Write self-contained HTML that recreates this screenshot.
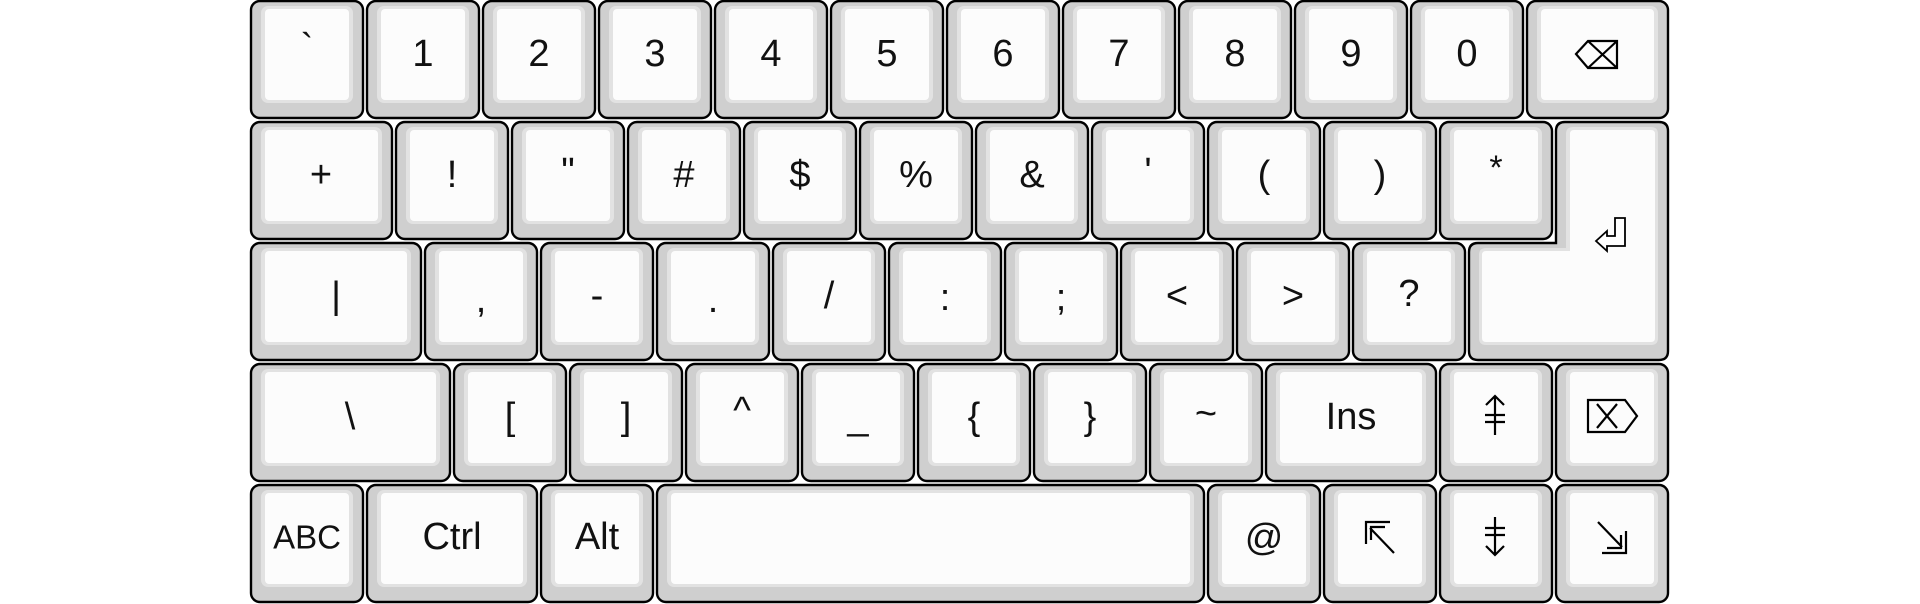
<!DOCTYPE html>
<html><head><meta charset="utf-8"><style>
html,body{margin:0;padding:0;background:#fff;width:1920px;height:604px;overflow:hidden}
svg{display:block}
text{font-family:"Liberation Sans",Arial,sans-serif;font-size:38px;fill:#111;text-anchor:middle;dominant-baseline:central}
.o{fill:#cfcfcf;stroke:#000;stroke-width:2.4}
.r{fill:#e2e2e2}
.f{fill:#fcfcfc}
.i{fill:none;stroke:#000;stroke-width:2.2}
</style></head><body>
<svg width="1920" height="604" viewBox="0 0 1920 604">
<defs>
<g id="k1"><rect class="o" x="0" y="0" width="112" height="117" rx="9"/><rect class="r" x="10" y="5" width="92" height="97" rx="7"/><rect class="f" x="14" y="8" width="84" height="91" rx="4"/></g>
<g id="k125"><rect class="o" x="0" y="0" width="141" height="117" rx="9"/><rect class="r" x="10" y="5" width="121" height="97" rx="7"/><rect class="f" x="14" y="8" width="113" height="91" rx="4"/></g>
<g id="k15"><rect class="o" x="0" y="0" width="170" height="117" rx="9"/><rect class="r" x="10" y="5" width="150" height="97" rx="7"/><rect class="f" x="14" y="8" width="142" height="91" rx="4"/></g>
<g id="k175"><rect class="o" x="0" y="0" width="199" height="117" rx="9"/><rect class="r" x="10" y="5" width="179" height="97" rx="7"/><rect class="f" x="14" y="8" width="171" height="91" rx="4"/></g>
<g id="ksp"><rect class="o" x="0" y="0" width="547" height="117" rx="9"/><rect class="r" x="10" y="5" width="527" height="97" rx="7"/><rect class="f" x="14" y="8" width="519" height="91" rx="4"/></g>
</defs>

<!-- Row 0 -->
<g transform="translate(0,1)">
<use href="#k1" x="251"/><use href="#k1" x="367"/><use href="#k1" x="483"/><use href="#k1" x="599"/><use href="#k1" x="715"/><use href="#k1" x="831"/><use href="#k1" x="947"/><use href="#k1" x="1063"/><use href="#k1" x="1179"/><use href="#k1" x="1295"/><use href="#k1" x="1411"/><use href="#k125" x="1527"/>
<text x="307" y="47">`</text><text x="423" y="53">1</text><text x="539" y="53">2</text><text x="655" y="53">3</text><text x="771" y="53">4</text><text x="887" y="53">5</text><text x="1003" y="53">6</text><text x="1119" y="53">7</text><text x="1235" y="53">8</text><text x="1351" y="53">9</text><text x="1467" y="53">0</text>
<path class="i" d="M1576,53 L1588,40 H1617 V67 H1588 Z M1588,40 L1617,67 M1617,40 L1588,67"/>
</g>

<!-- Row 1 -->
<g transform="translate(0,122)">
<use href="#k125" x="251"/><use href="#k1" x="396"/><use href="#k1" x="512"/><use href="#k1" x="628"/><use href="#k1" x="744"/><use href="#k1" x="860"/><use href="#k1" x="976"/><use href="#k1" x="1092"/><use href="#k1" x="1208"/><use href="#k1" x="1324"/><use href="#k1" x="1440"/>
<text x="321" y="53">+</text><text x="452" y="53">!</text><text x="568" y="50">"</text><text x="684" y="53">#</text><text x="800" y="53">$</text><text x="916" y="53">%</text><text x="1032" y="53">&amp;</text><text x="1148" y="50">'</text><text x="1264" y="53">(</text><text x="1380" y="53">)</text><text x="1496" y="46" style="font-size:34px">*</text>
</g>

<!-- Enter -->
<path class="o" d="M1565,122 H1659 Q1668,122 1668,131 V351 Q1668,360 1659,360 H1478 Q1469,360 1469,351 V252 Q1469,243 1478,243 H1556 V131 Q1556,122 1565,122 Z"/>
<path class="r" d="M1573,127 H1651 Q1658,127 1658,134 V338 Q1658,345 1651,345 H1486 Q1479,345 1479,338 V255 Q1479,248 1486,248 H1566 V134 Q1566,127 1573,127 Z"/>
<path class="f" d="M1574,130 H1651 Q1655,130 1655,134 V338 Q1655,342 1651,342 H1486 Q1482,342 1482,338 V255 Q1482,251 1486,251 H1570 V134 Q1570,130 1574,130 Z"/>
<path class="i" style="fill:#fff;stroke-width:1.8" d="M1596,241 L1607,231 V236 H1615 V218 H1625 V246 H1607 V251 Z"/>

<!-- Row 2 -->
<g transform="translate(0,243)">
<use href="#k15" x="251"/><use href="#k1" x="425"/><use href="#k1" x="541"/><use href="#k1" x="657"/><use href="#k1" x="773"/><use href="#k1" x="889"/><use href="#k1" x="1005"/><use href="#k1" x="1121"/><use href="#k1" x="1237"/><use href="#k1" x="1353"/>
<text x="336" y="53">|</text><text x="481" y="57">,</text><text x="597" y="53">-</text><text x="713" y="57">.</text><text x="829" y="53">/</text><text x="945" y="55">:</text><text x="1061" y="55">;</text><text x="1177" y="53">&lt;</text><text x="1293" y="53">&gt;</text><text x="1409" y="51">?</text>
</g>

<!-- Row 3 -->
<g transform="translate(0,364)">
<use href="#k175" x="251"/><use href="#k1" x="454"/><use href="#k1" x="570"/><use href="#k1" x="686"/><use href="#k1" x="802"/><use href="#k1" x="918"/><use href="#k1" x="1034"/><use href="#k1" x="1150"/><use href="#k15" x="1266"/><use href="#k1" x="1440"/><use href="#k1" x="1556"/>
<text x="350" y="53">\</text><text x="510" y="53">[</text><text x="626" y="53">]</text><text x="742" y="47">^</text><text x="858" y="53">_</text><text x="974" y="53">{</text><text x="1090" y="53">}</text><text x="1206" y="50">~</text><text x="1351" y="53">Ins</text>
</g>
<path class="i" d="M1495,396 V435 M1486,405 L1495,396 L1504,405 M1485,415 H1505 M1485,422 H1505"/>
<path class="i" d="M1588,400 H1625 L1637,416 L1625,432 H1588 Z M1597,404 L1617,428 M1617,404 L1597,428"/>

<!-- Row 4 -->
<g transform="translate(0,485)">
<use href="#k1" x="251"/><use href="#k15" x="367"/><use href="#k1" x="541"/><use href="#ksp" x="657"/><use href="#k1" x="1208"/><use href="#k1" x="1324"/><use href="#k1" x="1440"/><use href="#k1" x="1556"/>
<text x="307" y="52" style="font-size:33px">ABC</text><text x="452" y="52">Ctrl</text><text x="597" y="52">Alt</text><text x="1264" y="53">@</text>
</g>
<path class="i" d="M1495,517 V555 M1486,546 L1495,555 L1504,546 M1485,528 H1505 M1485,535 H1505"/>
<path class="i" d="M1598,522 L1622,547 M1626,531 V553 H1602 M1621,535 V548 H1607"/>
<path class="i" d="M1394,553 L1370,528 M1366,544 V522 H1390 M1371,540 V527 H1385"/>
</svg>
</body></html>
